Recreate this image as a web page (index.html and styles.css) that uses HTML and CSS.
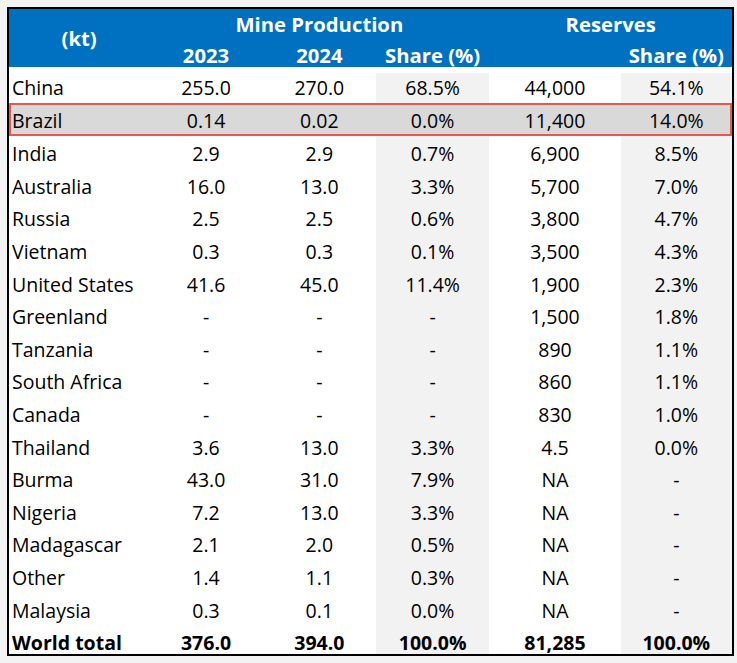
FILE: index.html
```html
<!DOCTYPE html>
<html>
<head>
<meta charset="utf-8">
<link rel="stylesheet" href="styles.css">
</head>
<body>
<table class="data">
  <colgroup>
    <col class="c1"><col class="c2"><col class="c3"><col class="c4"><col class="c5"><col class="c6">
  </colgroup>
  <thead>
    <tr class="h1">
      <th rowspan="2" class="kt">(kt)</th>
      <th colspan="3">Mine Production</th>
      <th colspan="2">Reserves</th>
    </tr>
    <tr class="h2">
      <th>2023</th><th>2024</th><th>Share (%)</th><th></th><th>Share (%)</th>
    </tr>
  </thead>
  <tbody>
    <tr class="first"><td>China</td><td>255.0</td><td>270.0</td><td class="sh">68.5%</td><td>44,000</td><td class="sh">54.1%</td></tr>
    <tr class="hl"><td>Brazil</td><td>0.14</td><td>0.02</td><td>0.0%</td><td>11,400</td><td>14.0%</td></tr>
    <tr class="after"><td>India</td><td>2.9</td><td>2.9</td><td class="sh">0.7%</td><td>6,900</td><td class="sh">8.5%</td></tr>
    <tr><td>Australia</td><td>16.0</td><td>13.0</td><td class="sh">3.3%</td><td>5,700</td><td class="sh">7.0%</td></tr>
    <tr><td>Russia</td><td>2.5</td><td>2.5</td><td class="sh">0.6%</td><td>3,800</td><td class="sh">4.7%</td></tr>
    <tr><td>Vietnam</td><td>0.3</td><td>0.3</td><td class="sh">0.1%</td><td>3,500</td><td class="sh">4.3%</td></tr>
    <tr><td>United States</td><td>41.6</td><td>45.0</td><td class="sh">11.4%</td><td>1,900</td><td class="sh">2.3%</td></tr>
    <tr><td>Greenland</td><td>-</td><td>-</td><td class="sh">-</td><td>1,500</td><td class="sh">1.8%</td></tr>
    <tr><td>Tanzania</td><td>-</td><td>-</td><td class="sh">-</td><td>890</td><td class="sh">1.1%</td></tr>
    <tr><td>South Africa</td><td>-</td><td>-</td><td class="sh">-</td><td>860</td><td class="sh">1.1%</td></tr>
    <tr><td>Canada</td><td>-</td><td>-</td><td class="sh">-</td><td>830</td><td class="sh">1.0%</td></tr>
    <tr><td>Thailand</td><td>3.6</td><td>13.0</td><td class="sh">3.3%</td><td>4.5</td><td class="sh">0.0%</td></tr>
    <tr><td>Burma</td><td>43.0</td><td>31.0</td><td class="sh">7.9%</td><td>NA</td><td class="sh">-</td></tr>
    <tr><td>Nigeria</td><td>7.2</td><td>13.0</td><td class="sh">3.3%</td><td>NA</td><td class="sh">-</td></tr>
    <tr><td>Madagascar</td><td>2.1</td><td>2.0</td><td class="sh">0.5%</td><td>NA</td><td class="sh">-</td></tr>
    <tr><td>Other</td><td>1.4</td><td>1.1</td><td class="sh">0.3%</td><td>NA</td><td class="sh">-</td></tr>
    <tr><td>Malaysia</td><td>0.3</td><td>0.1</td><td class="sh">0.0%</td><td>NA</td><td class="sh">-</td></tr>
    <tr class="total"><td>World total</td><td>376.0</td><td>394.0</td><td class="sh">100.0%</td><td>81,285</td><td class="sh">100.0%</td></tr>
  </tbody>
</table>
</body>
</html>
```
FILE: styles.css
```css
html, body {
  margin: 0;
  padding: 0;
  background: #f3f3f3;
}
body {
  padding: 7px;
  font-family: "Open Sans", "Noto Sans", sans-serif;
  color: #000;
}
.data {
  border-collapse: collapse;
  border-spacing: 0;
  table-layout: fixed;
  width: 727px;
  border: 2px solid #000;
  background: #fff;
  font-size: 19.5px;
}
.c1 { width: 141px; }
.c2 { width: 113px; }
.c3 { width: 113px; }
.c4 { width: 113px; }
.c5 { width: 131px; }
.c6 { width: 112px; }
thead th {
  background: #0070c0;
  color: #fff;
  font-weight: 700;
  font-size: 20.3px;
  padding: 0;
  text-align: center;
  line-height: 1;
}
.h1 th { height: 29px; vertical-align: middle; padding-top: 1px; }
.h1 th.kt { padding-top: 0; }
.h2 th { height: 24px; vertical-align: middle; padding-top: 4px; }
.kt { vertical-align: middle; }
tbody td {
  height: 20.6px;
  padding: 12px 0 0 0;
  text-align: center;
  vertical-align: top;
  line-height: 1;
  white-space: nowrap;
}
tbody tr.first td {
  height: 25px;
  padding-top: 11px;
}
tbody tr.first td.sh {
  box-shadow: inset 0 6px 0 #fff;
}
tbody tr.hl td {
  height: 25px;
  padding-top: 8px;
}
tbody tr.after td {
  height: 20.55px;
  padding-top: 8.25px;
}
tbody td:first-child {
  text-align: left;
  padding-left: 3px;
}
td.sh {
  background: #f2f2f2;
}
tr.hl td {
  background: #d9d9d9;
  box-shadow: inset 0 2px 0 #e8574d, inset 0 -2px 0 #e8574d;
}
tr.hl td:first-child {
  box-shadow: inset 0 2px 0 #e8574d, inset 0 -2px 0 #e8574d, inset 2px 0 0 #e8574d;
}
tr.hl td:last-child {
  box-shadow: inset 0 2px 0 #e8574d, inset 0 -2px 0 #e8574d, inset -2px 0 0 #e8574d;
}
tr.total td {
  font-weight: 700;
}
```
